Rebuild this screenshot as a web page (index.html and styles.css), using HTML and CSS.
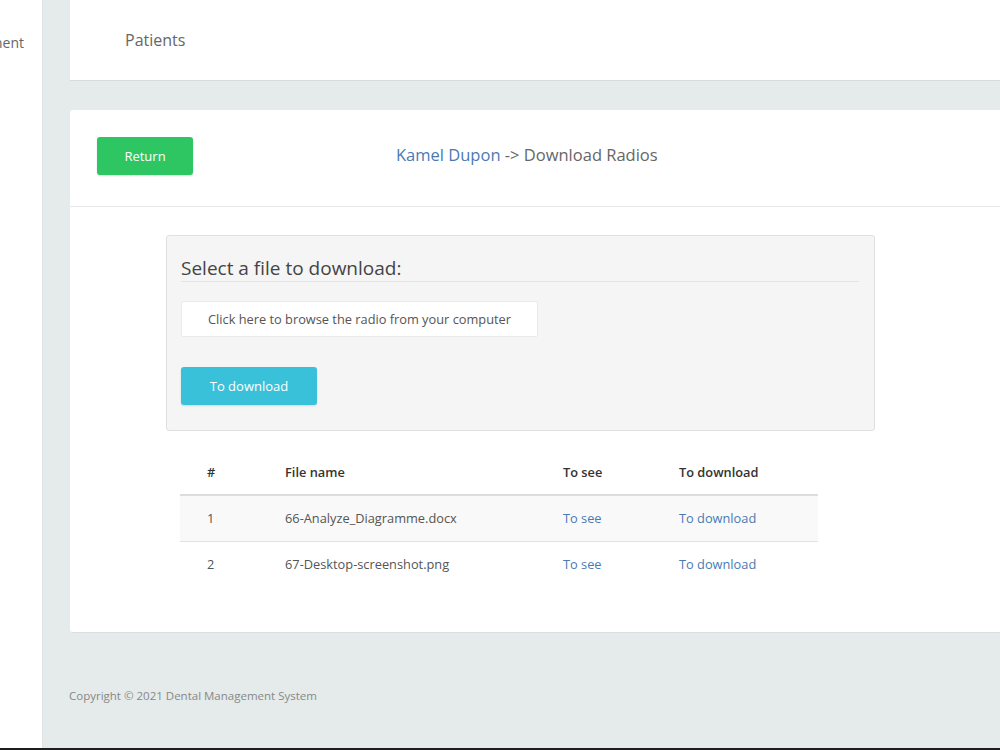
FILE: index.html
```html
<html>
    <head>
        <title>Download Radios</title>
        <link rel="stylesheet" href="styles.css">
    </head>
    <body>
        <div class="page">
            <aside class="side">
                <div class="brand"><span>Dental Management</span></div>
            </aside>
            <div class="main">
                <div class="topbar">
                    <span class="crumb">Patients</span>
                </div>

                <div class="card">
                    <div class="card-head">
                        <button class="btn-return">Return</button>
                        <h2 class="title"><a href="#">Kamel Dupon</a> -&gt; Download Radios</h2>
                    </div>
                    <div class="card-body">
                        <div class="upload">
                            <h3>Select a file to download:</h3>
                            <label class="browse">Click here to browse the radio from your computer</label>
                            <button class="btn-send">To download</button>
                        </div>

                        <table class="files">
                            <colgroup>
                                <col class="c1"><col class="c2"><col class="c3"><col class="c4">
                            </colgroup>
                            <thead>
                                <tr><th>#</th><th>File name</th><th>To see</th><th>To download</th></tr>
                            </thead>
                            <tbody>
                                <tr>
                                    <td>1</td>
                                    <td>66-Analyze_Diagramme.docx</td>
                                    <td><a href="#">To see</a></td>
                                    <td><a href="#">To download</a></td>
                                </tr>
                                <tr>
                                    <td>2</td>
                                    <td>67-Desktop-screenshot.png</td>
                                    <td><a href="#">To see</a></td>
                                    <td><a href="#">To download</a></td>
                                </tr>
                            </tbody>
                        </table>
                    </div>
                </div>

                <footer class="foot">Copyright © 2021 Dental Management System</footer>
            </div>
        </div>
    </body>
</html>
```

FILE: styles.css
```css
body
{
    margin: 0;
    font-family: "Open Sans", "Liberation Sans", sans-serif;
    color: #555;
    overflow: hidden;
}

.page
{
    display: flex;
    height: 748px;
    border-bottom: 2px solid #1e1e1e;
}

.side
{
    width: 42px;
    flex: none;
    background: #fff;
    border-right: 1px solid #dfe5e4;
    overflow: hidden;
}

.brand
{
    display: flex;
    justify-content: flex-end;
    height: 84px;
    align-items: center;
    font-size: 14px;
    color: #666;
    white-space: nowrap;
    padding-right: 18px;
}

.main
{
    flex: 1;
    background: #e4ebea;
    padding-left: 27px;
    display: flex;
    flex-direction: column;
}

.topbar
{
    height: 80px;
    background: #fff;
    border-bottom: 1px solid #d6dcdb;
    display: flex;
    align-items: center;
    padding-left: 55px;
    margin-bottom: 29px;
}

.crumb
{
    font-size: 16px;
    color: #666;
}

.card
{
    background: #fff;
    border-bottom: 1px solid #d9dfde;
    height: 522px;
    border-radius: 3px 0 0 3px;
}

.card-head
{
    height: 96px;
    border-bottom: 1px solid #e6e9e9;
    display: flex;
    align-items: center;
    padding-left: 27px;
    gap: 203px;
}

.btn-return
{
    width: 96px;
    height: 38px;
    background: #2dc663;
    color: #fff;
    border: none;
    border-radius: 3px;
    font-family: inherit;
    font-size: 13px;
    box-shadow: 0 1px 2px rgba(0,0,0,.12);
    margin-top: -4px;
}

.title
{
    margin: 0;
    font-weight: normal;
    font-size: 16.5px;
    color: #666;
    margin-top: -8px;
}

.title a
{
    color: #4a7ab4;
    text-decoration: none;
}

.card-body
{
    padding: 28px 0 0 96px;
}

.upload
{
    width: 678px;
    background: #f5f5f5;
    border: 1px solid #e0e0e0;
    border-radius: 3px;
    padding: 19px 15px 25px 14px;
}

.upload h3
{
    margin: 0;
    font-weight: normal;
    font-size: 19px;
    line-height: 26px;
    color: #444;
    border-bottom: 1px solid #e3e3e3;
}

.browse
{
    display: block;
    width: 357px;
    height: 36px;
    line-height: 35px;
    margin-top: 19px;
    background: #fff;
    border: 1px solid #eaeaea;
    border-radius: 2px;
    box-sizing: border-box;
    text-align: center;
    font-size: 12.8px;
    color: #555;
}

.btn-send
{
    display: block;
    width: 136px;
    height: 38px;
    margin-top: 30px;
    background: #39c1da;
    color: #fff;
    border: none;
    border-radius: 3px;
    font-family: inherit;
    font-size: 13px;
    box-shadow: 0 1px 2px rgba(0,0,0,.12);
}

.files
{
    width: 638px;
    margin: 19px 0 0 14px;
    border-collapse: collapse;
    table-layout: fixed;
    font-size: 12.8px;
}

.c1 { width: 78px; }
.c2 { width: 278px; }
.c3 { width: 116px; }
.c4 { width: 166px; }

.files th
{
    height: 45px;
    text-align: left;
    padding: 0 0 0 27px;
    color: #333;
    font-weight: 600;
    border-bottom: 2px solid #dddddd;
}

.files td
{
    height: 46px;
    padding: 0 0 0 27px;
    color: #555;
    border-bottom: 1px solid #e2e2e2;
}

.files tbody tr:first-child
{
    background: #f9f9f9;
}

.files tbody tr:last-child td
{
    border-bottom: none;
}

.files a
{
    color: #4a7ab4;
    text-decoration: none;
}

.foot
{
    padding-top: 55px;
    font-size: 11.5px;
    color: #888;
    margin-left: -1px;
}
```
